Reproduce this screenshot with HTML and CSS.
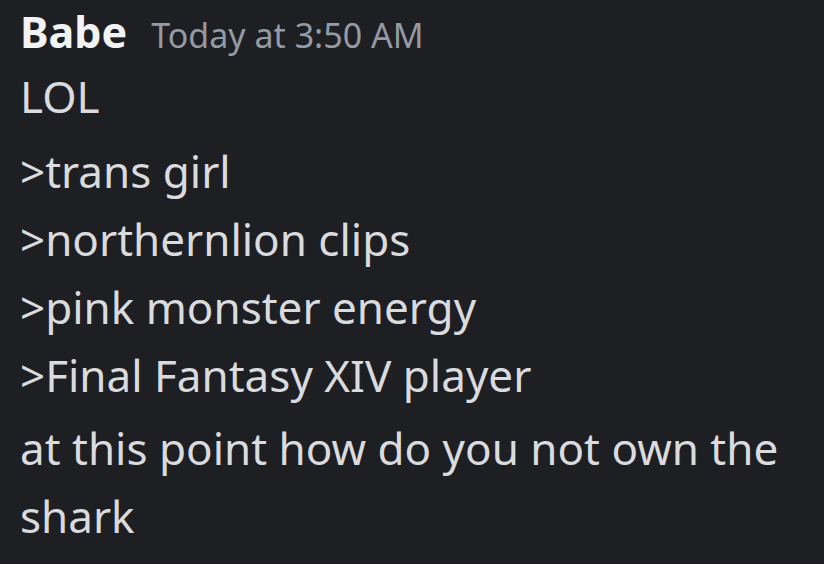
FILE: index.html
```html
<!DOCTYPE html>
<html lang="en">
<head>
<meta charset="utf-8">
<title>Message</title>
<link rel="stylesheet" href="styles.css">
</head>
<body>
<div class="message">
  <div class="header">
    <span class="name">Babe</span>
    <span class="time">Today at 3:50 AM</span>
  </div>
  <p class="line big">LOL</p>
  <div class="quotes">
    <p class="line">&gt;trans girl</p>
    <p class="line">&gt;northernlion clips</p>
    <p class="line">&gt;pink monster energy</p>
    <p class="line">&gt;Final Fantasy XIV player</p>
  </div>
  <p class="line para">at this point how do you not own the shark</p>
</div>
</body>
</html>
```

FILE: styles.css
```css
html, body {
  margin: 0;
  padding: 0;
  background: #1e1f22;
  height: 100%;
  overflow: hidden;
}
.message {
  padding: 2px 20px 0;
  font-family: "Noto Sans", "Open Sans", sans-serif;
  color: #d9dbdf;
}
.header {
  display: flex;
  align-items: baseline;
  gap: 24px;
  height: 60px;
  line-height: 60px;
}
.name {
  font-size: 43px;
  font-weight: 700;
  color: #f2f3f5;
}
.time {
  font-size: 34px;
  color: #949ba4;
}
.line {
  margin: 0;
  font-size: 44px;
  line-height: 68px;
}
.big {
  margin-top: 0;
}
.quotes {
  margin-top: 7px;
}
.para {
  margin-top: 5px;
  max-width: 780px;
}
```
